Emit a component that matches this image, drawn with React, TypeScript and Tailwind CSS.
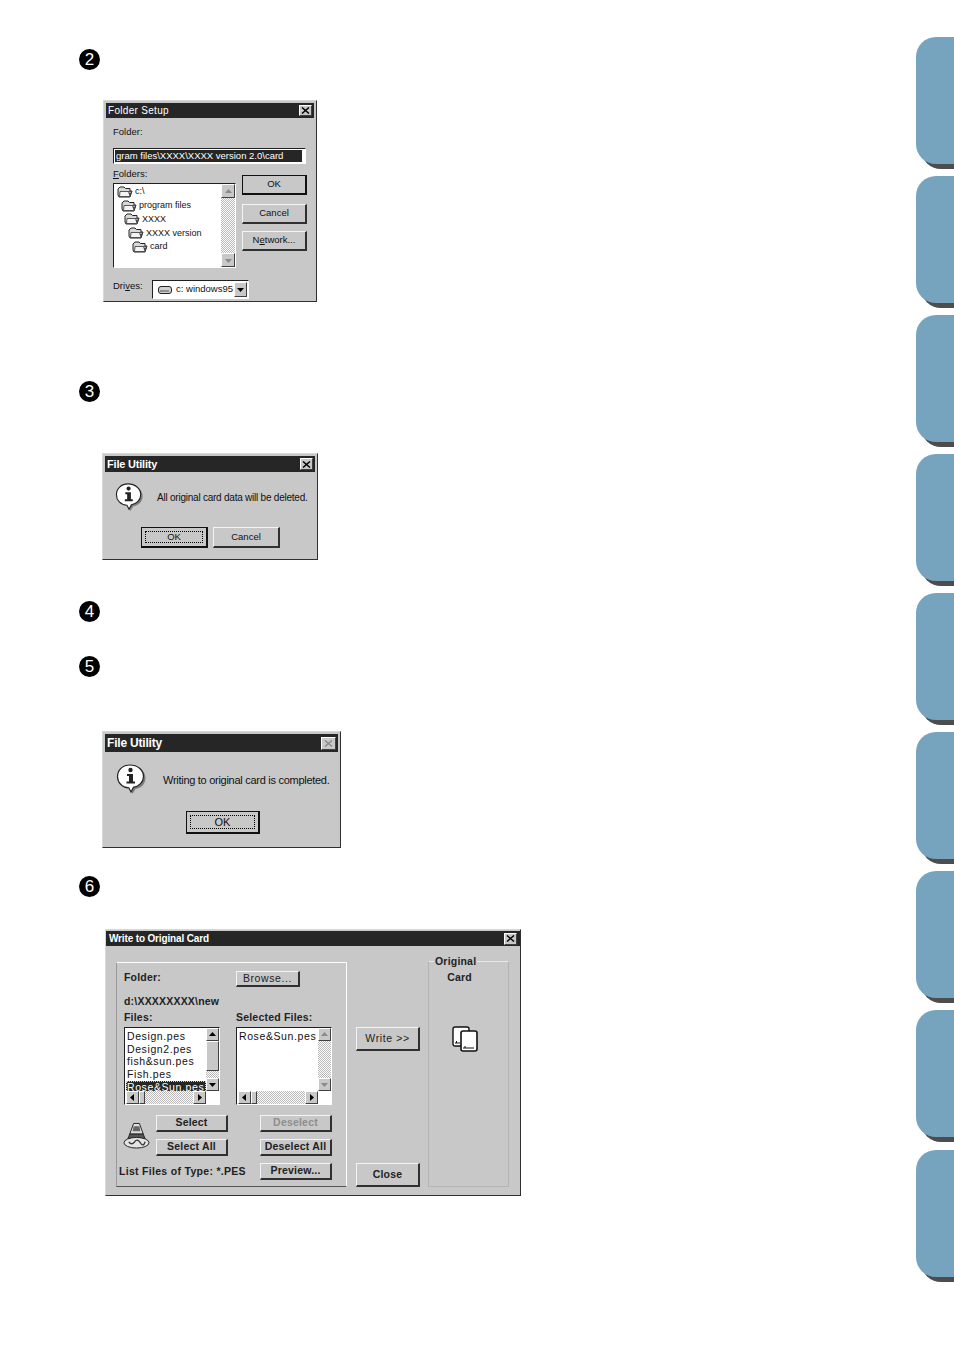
import React from "react";

const dither = "bg-[repeating-conic-gradient(#ffffff_0_25%,#b8b8b8_0_50%)] bg-[length:2px_2px]";

function Badge({ n, cls }: { n: number; cls: string }) {
  return (
    <div className={`w-[21px] h-[21px] rounded-full bg-black text-white flex items-center justify-center text-[17px] leading-none ${cls}`}>
      {n}
    </div>
  );
}

function Shell({ cls, children }: { cls: string; children: React.ReactNode }) {
  return (
    <div className={`bg-[#c8c8c8] border border-t-[#d8d8d8] border-l-[#d8d8d8] border-r-[#303030] border-b-[#303030] p-[2px] flex flex-col ${cls}`}>
      {children}
    </div>
  );
}

function CloseBox({ cls, dim }: { cls: string; dim?: boolean }) {
  return (
    <div className={`bg-[#c8c8c8] border border-t-white border-l-white border-r-[#404040] border-b-[#404040] flex items-center justify-center ${cls}`}>
      <svg viewBox="0 0 10 8" className="w-[9px] h-[7px]">
        <path d="M1 0.5 L9 7.5 M9 0.5 L1 7.5" stroke={dim ? "#8a8a8a" : "#000"} strokeWidth="1.6" fill="none" />
      </svg>
    </div>
  );
}

function Btn({ cls, children, strong, focus }: { cls: string; children: React.ReactNode; strong?: boolean; focus?: boolean }) {
  return (
    <div
      className={`flex items-center justify-center bg-[#c8c8c8] border ${
        strong
          ? "border-[#111111] border-b-2 border-r-2"
          : "border-t-[#f4f4f4] border-l-[#f4f4f4] border-r-[#303030] border-b-[#303030] border-b-2 border-r-2"
      } ${cls}`}
    >
      {focus ? (
        <div className="w-[calc(100%-6px)] h-[calc(100%-6px)] border border-dotted border-black flex items-center justify-center">{children}</div>
      ) : (
        children
      )}
    </div>
  );
}

function FolderIcon({ cls }: { cls: string }) {
  return (
    <svg viewBox="0 0 16 12" className={`w-[16px] h-[12px] shrink-0 ${cls}`}>
      <path d="M1 3 L3 1 H7 L8.5 2.5 H13 V5 H15 L13 11 H2 L1 9 Z" fill="#d8d8d8" stroke="#222" strokeWidth="1" />
      <path d="M3 5.5 H14.5 L12.6 10.5 H2.5 Z" fill="#f4f4f4" stroke="#333" strokeWidth="0.8" />
      <path d="M11 6 L13 10.5 L14 7 Z" fill="#444" />
    </svg>
  );
}

function InfoIcon({ cls }: { cls: string }) {
  return (
    <svg viewBox="0 0 30 31" className={cls}>
      <path d="M16 3 C24 3 29 8 29 14 C29 20 25 24 19 25 L16 30 L14 25 Z" fill="#7d7d7d" />
      <path d="M13.5 1 C21 1 27 6 27 12.5 C27 18 22.5 22.5 17 23.2 L14.5 28 L12.3 23.8 C5.5 23.5 1 18.5 1 12.5 C1 6 6 1 13.5 1 Z" fill="#ffffff" stroke="#222222" strokeWidth="1.2" />
      <circle cx="14" cy="6" r="2.2" fill="#222" />
      <path d="M10.5 10 H16.5 V17.5 H18.5 V19.5 H10 V17.5 H12.5 V12 H10.5 Z" fill="#222" />
    </svg>
  );
}

function Arrow({ dir, dim }: { dir: "up" | "down" | "left" | "right"; dim?: boolean }) {
  const d = { up: "M0 5 L3.5 1 L7 5 Z", down: "M0 2 L7 2 L3.5 6 Z", left: "M5 0 L1 3.5 L5 7 Z", right: "M2 0 L6 3.5 L2 7 Z" }[dir];
  return (
    <svg viewBox="0 0 7 7" className="w-[7px] h-[7px]">
      <path d={d} fill={dim ? "#8a8a8a" : "#000"} />
    </svg>
  );
}

function ScrollBtn({ dir, dim, cls }: { dir: "up" | "down" | "left" | "right"; dim?: boolean; cls: string }) {
  return (
    <div className={`bg-[#c8c8c8] border border-t-white border-l-white border-r-[#404040] border-b-[#404040] flex items-center justify-center shrink-0 ${cls}`}>
      <Arrow dir={dir} dim={dim} />
    </div>
  );
}

function Sunken({ cls, children }: { cls: string; children: React.ReactNode }) {
  return <div className={`border border-t-[#202020] border-l-[#202020] border-r-white border-b-white bg-white ${cls}`}>{children}</div>;
}

function FolderDialog() {
  const rows: [string, string][] = [
    ["c:\\", "pl-[3px]"],
    ["program files", "pl-[7px]"],
    ["XXXX", "pl-[10px]"],
    ["XXXX version", "pl-[14px]"],
    ["card", "pl-[18px]"],
  ];
  return (
    <Shell cls="w-[214px] h-[202px] ml-[24px] mt-[30px]">
      <div className="h-[15px] bg-[#262626] text-white text-[10px] leading-[15px] pl-[2px] flex justify-between items-center tracking-[0.3px]">
        Folder Setup
        <CloseBox cls="w-[13px] h-[11px] mr-[2px]" />
      </div>
      <div className="pl-[7px] text-[9.5px] text-[#111]">
        <div className="mt-[7px] h-[14px] leading-[14px]">Folder:</div>
        <Sunken cls="mt-[9px] w-[193px] h-[16px] p-[1px] pr-[3px]">
          <div className="h-full bg-[#262626] text-white leading-[12px] overflow-hidden whitespace-nowrap pl-[1px]">gram files\XXXX\XXXX version 2.0\card</div>
        </Sunken>
        <div className="flex">
          <div className="w-[123px]">
            <div className="mt-[3px] h-[14px] leading-[14px]">
              <span className="underline">F</span>olders:
            </div>
            <Sunken cls="mt-[2px] h-[85px] flex">
              <div className="flex-1 pt-[1px]">
                {rows.map(([t, c]) => (
                  <div key={t} className={`flex items-center gap-[2px] h-[13.75px] leading-[13px] whitespace-nowrap text-[9px] ${c}`}>
                    <FolderIcon cls="" />
                    {t}
                  </div>
                ))}
              </div>
              <div className={`w-[14px] flex flex-col justify-between ${dither}`}>
                <ScrollBtn dir="up" dim cls="h-[14px]" />
                <ScrollBtn dir="down" dim cls="h-[14px]" />
              </div>
            </Sunken>
          </div>
          <div className="ml-[6px] w-[65px]">
            <Btn strong cls="mt-[11px] h-[20px]">OK</Btn>
            <Btn cls="mt-[9px] h-[20px]">Cancel</Btn>
            <Btn cls="mt-[7px] h-[20px]">
              <span>N<span className="underline">e</span>twork...</span>
            </Btn>
          </div>
        </div>
        <div className="flex items-center mt-[12px]">
          <div className="w-[39px] leading-[14px] -mt-[7px]">
            Dri<span className="underline">v</span>es:
          </div>
          <Sunken cls="w-[97px] h-[19px] flex items-center pl-[5px] overflow-hidden">
            <svg viewBox="0 0 14 8" className="w-[14px] h-[8px] shrink-0">
              <rect x="0.5" y="0.5" width="13" height="7" rx="2.5" fill="#d0d0d0" stroke="#222" />
              <path d="M2 5 H11" stroke="#555" />
            </svg>
            <span className="ml-[4px] flex-1 whitespace-nowrap overflow-hidden text-[9.5px]">c: windows95</span>
            <ScrollBtn dir="down" cls="w-[13px] h-[15px] mr-[1px]" />
          </Sunken>
        </div>
      </div>
    </Shell>
  );
}

function DeleteDialog() {
  return (
    <Shell cls="w-[216px] h-[107px] ml-[23px] mt-[51px]">
      <div className="h-[16px] bg-[#262626] text-white text-[11px] font-bold leading-[16px] pl-[2px] flex justify-between items-center tracking-[-0.2px]">
        File Utility
        <CloseBox cls="w-[13px] h-[12px] mr-[2px]" />
      </div>
      <div className="flex items-center pl-[10px] mt-[11px]">
        <InfoIcon cls="w-[29px] h-[29px] shrink-0" />
        <div className="ml-[13px] text-[10px] tracking-[-0.23px] text-[#111] whitespace-nowrap">All original card data will be deleted.</div>
      </div>
      <div className="flex text-[9.5px] text-[#111] ml-[36px] mt-[15px] gap-[5px]">
        <Btn strong focus cls="w-[67px] h-[21px]">OK</Btn>
        <Btn cls="w-[67px] h-[21px]">Cancel</Btn>
      </div>
    </Shell>
  );
}

function DoneDialog() {
  return (
    <Shell cls="w-[239px] h-[117px] ml-[23px] mt-[54px]">
      <div className="h-[18px] bg-[#262626] text-white text-[12px] font-bold leading-[18px] pl-[2px] flex justify-between items-center tracking-[-0.2px]">
        File Utility
        <CloseBox dim cls="w-[15px] h-[13px] mr-[2px]" />
      </div>
      <div className="flex items-center pl-[11px] mt-[12px]">
        <InfoIcon cls="w-[31px] h-[31px] shrink-0" />
        <div className="ml-[16px] text-[11px] text-[#111] whitespace-nowrap mt-[2px] tracking-[-0.28px]">Writing to original card is completed.</div>
      </div>
      <Btn strong focus cls="w-[74px] h-[23px] ml-[81px] mt-[16px] text-[11px] text-[#111]">OK</Btn>
    </Shell>
  );
}

function WBtn({ cls, children, dim }: { cls: string; children: React.ReactNode; dim?: boolean }) {
  return (
    <Btn cls={`font-bold ${dim ? "text-[#8e8e8e]" : "text-[#222]"} ${cls}`}>{children}</Btn>
  );
}

function FileList({ items, selected, dimV, thumb, cls }: { items: string[]; selected?: string; dimV?: boolean; thumb?: boolean; cls?: string }) {
  return (
    <Sunken cls={`h-[78px] flex flex-col tracking-[0.6px] ${cls ?? ""}`}>
      <div className="flex flex-1 min-h-0 pl-[1px]">
        <div className="flex-1 overflow-hidden pt-[2px]">
          {items.map((t) => (
            <div
              key={t}
              className={`h-[12.7px] leading-[13px] whitespace-nowrap pl-[1px] ${
                t === selected ? "bg-[#262626] text-white outline-1 outline-dotted outline-[#ccc] -outline-offset-1" : "text-[#111]"
              }`}
            >
              {t}
            </div>
          ))}
        </div>
        <div className={`w-[13px] shrink-0 flex flex-col ${dither}`}>
          <ScrollBtn dir="up" dim={dimV} cls="h-[13px]" />
          {thumb && <div className="h-[30px] bg-[#c8c8c8] border border-t-white border-l-white border-r-[#404040] border-b-[#404040]" />}
          <div className="flex-1" />
          <ScrollBtn dir="down" dim={dimV} cls="h-[13px]" />
        </div>
      </div>
      <div className="flex h-[13px] shrink-0 pl-[1px] pr-[13px]">
        <ScrollBtn dir="left" cls="w-[13px]" />
        <div className="w-[6px] bg-[#c8c8c8] border border-t-white border-l-white border-r-[#404040] border-b-[#404040]" />
        <div className={`flex-1 ${dither}`} />
        <ScrollBtn dir="right" cls="w-[13px]" />
      </div>
    </Sunken>
  );
}

function WriteDialog() {
  return (
    <Shell cls="w-[416px] h-[267px] ml-[26px] mt-[32px] text-[10.5px] tracking-[0.2px]">
      <div className="-mx-[2px] -mt-[1px] h-[15px] bg-[#262626] text-white text-[10px] font-bold leading-[15px] pl-[3px] flex justify-between items-center tracking-[-0.15px]">
        Write to Original Card
        <CloseBox cls="w-[13px] h-[12px] mr-[3px]" />
      </div>
      <div className="flex pl-[8px] mt-[16px] font-bold text-[#222]">
        <div className="w-[231px] h-[225px] border border-t-white border-r-white border-l-[#9a9a9a] border-b-[#555] pl-[7px] pr-[14px] flex flex-col">
          <div className="flex items-center mt-[8px]">
            <div className="w-[112px] -mt-[2px]">Folder:</div>
            <WBtn cls="w-[64px] h-[16px] font-normal tracking-[0.6px]">Browse...</WBtn>
          </div>
          <div className="mt-[7px] h-[14px] leading-[14px]">d:\XXXXXXXX\new</div>
          <div className="flex mt-[2px] h-[14px] leading-[14px]">
            <div className="w-[112px]">Files:</div>
            <div>Selected Files:</div>
          </div>
          <div className="flex mt-[3px] font-normal">
            <FileList cls="w-[96px]" items={["Design.pes", "Design2.pes", "fish&sun.pes", "Fish.pes", "Rose&Sun.pes"]} selected="Rose&Sun.pes" thumb />
            <FileList cls="w-[96px] ml-[16px]" items={["Rose&Sun.pes"]} dimV />
          </div>
          <div className="flex mt-[10px]">
            <svg viewBox="0 0 28 28" className="w-[27px] h-[28px] mt-[7px] -ml-[1px] mr-[6px] shrink-0">
              <path d="M11 1 H17 L21 12 H7 Z" fill="#e0e0e0" stroke="#222" />
              <path d="M11 4 H17 L18 9 H10 Z" fill="#666" />
              <path d="M7 12 H21 L23 17 H5 Z" fill="#555" stroke="#222" />
              <ellipse cx="14" cy="21" rx="13" ry="5.5" fill="#e4e4e4" stroke="#222" />
              <path d="M6 20 Q9 24 12 20 T18 21 T23 20" stroke="#333" fill="none" strokeWidth="1.4" />
            </svg>
            <div className="flex flex-col gap-[7px]">
              <WBtn cls="w-[72px] h-[17px]">Select</WBtn>
              <WBtn cls="w-[72px] h-[17px]">Select All</WBtn>
            </div>
            <div className="flex flex-col gap-[7px] ml-[32px]">
              <WBtn dim cls="w-[72px] h-[17px]">Deselect</WBtn>
              <WBtn cls="w-[72px] h-[17px]">Deselect All</WBtn>
            </div>
          </div>
          <div className="flex items-center mt-[7px] -ml-[5px]">
            <div className="w-[141px] whitespace-nowrap tracking-[0.3px]">List Files of Type: *.PES</div>
            <WBtn cls="w-[72px] h-[17px]">Preview...</WBtn>
          </div>
        </div>
        <div className="ml-[9px] w-[64px] flex flex-col">
          <WBtn cls="mt-[65px] h-[24px] font-normal tracking-[0.6px]">Write &gt;&gt;</WBtn>
          <WBtn cls="mt-[112px] h-[24px]">Close</WBtn>
        </div>
        <fieldset className="ml-[8px] w-[81px] h-[232px] -mt-[7px] border border-[#b4b4b4] border-t-[#e8e8e8] px-0">
          <legend className="ml-[5px] px-[1px] leading-[12px] text-left">Original</legend>
          <div className="leading-[12px] mt-[4px] text-center pr-[18px]">Card</div>
          <svg viewBox="0 0 26 27" className="w-[26px] h-[27px] ml-[23px] mt-[43px]">
            <rect x="1" y="1" width="16" height="19" rx="2" fill="#fff" stroke="#111" strokeWidth="1.4" />
            <path d="M3 17 H8 M4.5 15 V17" stroke="#111" />
            <rect x="9" y="5" width="16" height="20" rx="2" fill="#fff" stroke="#111" strokeWidth="1.6" />
            <path d="M11 22 H22 M13 20 V22" stroke="#111" />
          </svg>
        </fieldset>
      </div>
    </Shell>
  );
}

function Tab() {
  return <div className="w-[38px] h-[127px] bg-[#76a3bd] rounded-l-[20px] shadow-[5px_5px_0_#4d4d4d] shrink-0 last:mt-[1px]" />;
}

export default function App() {
  return (
    <div className="w-[954px] h-[1348px] overflow-hidden bg-white flex justify-between font-['Liberation_Sans',Arial,sans-serif]">
      <div className="pl-[79px] pt-[49px]">
        <Badge n={2} cls="" />
        <FolderDialog />
        <Badge n={3} cls="mt-[79px]" />
        <DeleteDialog />
        <Badge n={4} cls="mt-[41px]" />
        <Badge n={5} cls="mt-[34px]" />
        <DoneDialog />
        <Badge n={6} cls="mt-[28px]" />
        <WriteDialog />
      </div>
      <div className="pt-[37px] flex flex-col gap-[12px] overflow-hidden pb-[20px]">
        {Array.from({ length: 9 }).map((_, i) => (
          <Tab key={i} />
        ))}
      </div>
    </div>
  );
}
